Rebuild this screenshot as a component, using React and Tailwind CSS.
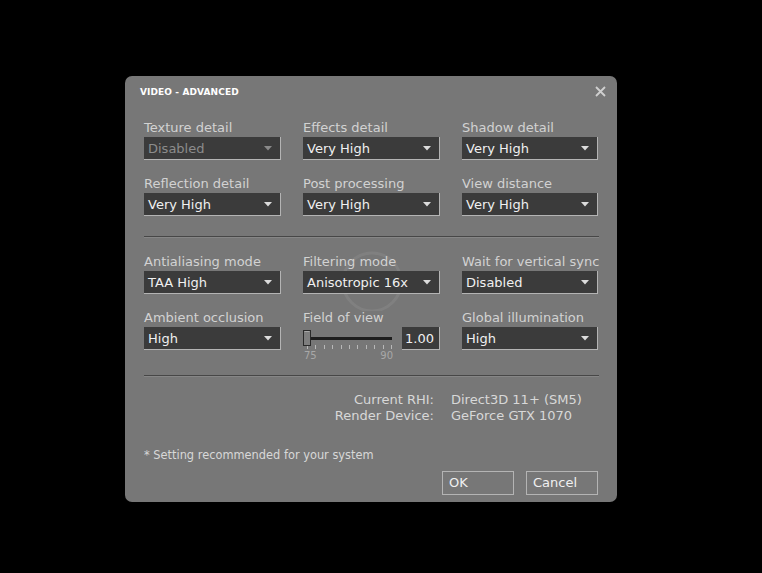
import React from "react";

const font = { fontFamily: '"DejaVu Sans", "Liberation Sans", sans-serif' };

function Arrow({ disabled }) {
  return (
    <svg width="8" height="5" viewBox="0 0 8 5" className="shrink-0">
      <polygon points="0,0 8,0 4,4.5" fill={disabled ? "#8a8a8a" : "#dcdcdc"} />
    </svg>
  );
}

function Dropdown({ label, value, disabled, w = "w-[137px]" }) {
  return (
    <div className={"flex flex-col shrink-0 " + w}>
      <div className="h-[17px] leading-[17px] text-[13px] text-[#d2d2d2] whitespace-nowrap">{label}</div>
      <div className="mt-[1px] h-[23px] bg-[#3b3b3b] border-r border-b border-[#b4b4b4] flex items-center justify-between pl-[4px] pr-[8px]">
        <span className={"pt-[2px] text-[13px] leading-[16px] " + (disabled ? "text-[#8c8c8c]" : "text-[#f0f0f0]")}>{value}</span>
        <Arrow disabled={disabled} />
      </div>
    </div>
  );
}

function Slider() {
  const ticks = Array.from({ length: 11 }, (_, i) => 4 + i * 8.4);
  return (
    <div className="flex flex-col w-[137px] shrink-0">
      <div className="h-[17px] leading-[17px] text-[13px] text-[#d2d2d2] whitespace-nowrap">Field of view</div>
      <div className="mt-[1px] h-[23px] flex items-start justify-between">
        <div className="relative w-[92px] h-[23px]">
          <svg width="92" height="23" viewBox="0 0 92 23" className="block">
            <rect x="4" y="10" width="85" height="3" fill="#1e1e1e" />
            {ticks.map((x, i) => (
              <rect key={i} x={Math.round(x)} y="18" width="1" height="4" fill="#b8b8b8" />
            ))}
            <rect x="0.5" y="3.5" width="7" height="15" fill="#7e7e7e" stroke="#2a2a2a" />
            <line x1="1.5" y1="4.5" x2="6.5" y2="4.5" stroke="#a8a8a8" />
          </svg>
          <div className="absolute left-[1px] top-[23px] w-[89px] flex justify-between text-[10px] leading-[12px] text-[#a8a8a8]">
            <span>75</span>
            <span>90</span>
          </div>
        </div>
        <div className="w-[38px] h-[23px] bg-[#3b3b3b] border-r border-b border-[#b4b4b4] flex items-center pl-[3px] pt-[2px] text-[13px] leading-[16px] text-[#f0f0f0]">
          1.00
        </div>
      </div>
    </div>
  );
}

function Separator() {
  return <div className="h-[2px] border-t border-[#474747] border-b border-b-[#868686]" />;
}

export default function App() {
  return (
    <div className="min-h-[573px] w-full bg-black pl-[125px] pt-[76px]" style={font}>
      <div className="relative w-[492px] h-[426px] bg-[#777777] rounded-[7px] overflow-hidden">
        <svg className="absolute left-[215px] top-[175px] pointer-events-none" width="90" height="60" viewBox="0 0 90 60">
          <circle cx="32" cy="31" r="29" fill="none" stroke="rgba(255,255,255,0.07)" strokeWidth="3" />
        </svg>
        <div className="relative flex flex-col">
          <div className="h-[30px] flex items-center justify-between pl-[15px] pr-[11px]">
            <span className="pt-[4px] text-[9px] font-bold text-white tracking-[0.1px]">VIDEO - ADVANCED</span>
            <svg width="11" height="11" viewBox="0 0 11 11" className="mt-[1px]">
              <path d="M1 1 L10 10 M10 1 L1 10" stroke="#cfcfcf" strokeWidth="1.8" />
            </svg>
          </div>
          <div className="pl-[19px] pr-[18px] flex flex-col">
            <div className="mt-[13px] flex gap-[22px]">
              <Dropdown label="Texture detail" value="Disabled" disabled />
              <Dropdown label="Effects detail" value="Very High" />
              <Dropdown label="Shadow detail" value="Very High" w="w-[136px]" />
            </div>
            <div className="mt-[15px] flex gap-[22px]">
              <Dropdown label="Reflection detail" value="Very High" />
              <Dropdown label="Post processing" value="Very High" />
              <Dropdown label="View distance" value="Very High" w="w-[136px]" />
            </div>
            <div className="mt-[20px]">
              <Separator />
            </div>
            <div className="mt-[15px] flex gap-[22px]">
              <Dropdown label="Antialiasing mode" value="TAA High" />
              <Dropdown label="Filtering mode" value="Anisotropic 16x" />
              <Dropdown label="Wait for vertical sync" value="Disabled" w="w-[136px]" />
            </div>
            <div className="mt-[15px] flex gap-[22px]">
              <Dropdown label="Ambient occlusion" value="High" />
              <Slider />
              <Dropdown label="Global illumination" value="High" w="w-[136px]" />
            </div>
            <div className="mt-[25px]">
              <Separator />
            </div>
            <div className="mt-[15px] grid grid-cols-[290px_1fr] gap-x-[17px] text-[13px] leading-[16px] text-[#d8d8d8]">
              <span className="text-right">Current RHI:</span>
              <span>Direct3D 11+ (SM5)</span>
              <span className="text-right">Render Device:</span>
              <span>GeForce GTX 1070</span>
            </div>
            <div className="mt-[24px] text-[11.4px] leading-[14px] text-[#d8d8d8]">
              * Setting recommended for your system
            </div>
            <div className="mt-[9px] flex justify-end gap-[12px] pr-[1px]">
              <button className="w-[72px] h-[24px] border border-[#b4b4b4] text-left pl-[6px] text-[13px] text-[#f0f0f0] bg-transparent">
                OK
              </button>
              <button className="w-[72px] h-[24px] border border-[#b4b4b4] text-left pl-[6px] text-[13px] text-[#f0f0f0] bg-transparent">
                Cancel
              </button>
            </div>
          </div>
        </div>
      </div>
    </div>
  );
}
